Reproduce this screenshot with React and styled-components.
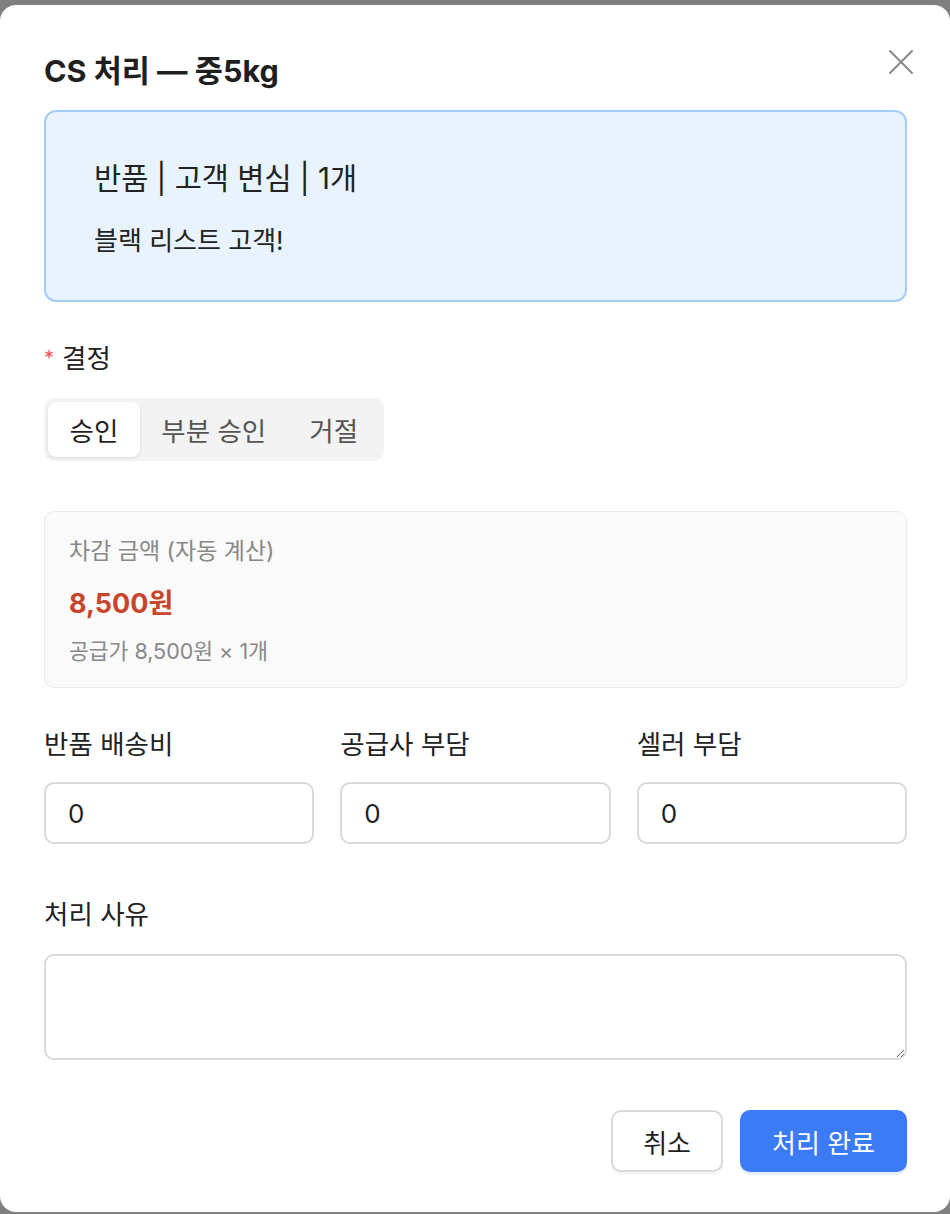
import React, {useState} from "react"
import styled, {createGlobalStyle} from "styled-components"


const GlobalStyle = createGlobalStyle`
    html, body {
        margin: 0;
        padding: 0;
        background: #808080;
    }
    body {
        font-family: Inter, "Noto Sans CJK KR", "Noto Sans", sans-serif;
        color: #1f1f1f;
    }
    * {
        box-sizing: border-box;
    }
`

const Overlay = styled.div`
    padding-top: 5px;
    height: 1214px;
    overflow: hidden;
`

const Modal = styled.div`
    background: #fff;
    border-radius: 16px;
    height: 1207px;
    padding: 38px 43px 0 44px;
    display: flex;
    flex-direction: column;
`

const Header = styled.div`
    display: flex;
    justify-content: space-between;
    align-items: flex-start;
    margin-bottom: 22px;
`

const Title = styled.h2`
    margin: 11px 0 0;
    font-size: 30.5px;
    line-height: 34px;
    font-weight: 700;
    color: #1f1f1f;
`

const CloseButton = styled.button`
    width: 32px;
    height: 32px;
    margin: 3px -10px 0 0;
    padding: 0;
    border: none;
    background: none;
    display: flex;
    align-items: center;
    justify-content: center;
    color: #8a8a8a;
    cursor: pointer;
`

const InfoBox = styled.div`
    height: 192px;
    border: 2px solid #a3cdf8;
    border-radius: 12px;
    background: #e8f3fe;
    padding: 48px 48px 0;
`

const InfoTitle = styled.div`
    font-size: 29.5px;
    line-height: 36px;
    color: #222;
`

const InfoNote = styled.div`
    margin-top: 29px;
    font-size: 26px;
    line-height: 32px;
    color: #222;
`

const Label = styled.div`
    font-size: 26.5px;
    line-height: 34px;
    color: #222;
    margin-top: ${props => props.top}px;
    margin-bottom: ${props => props.bottom}px;
`

const Required = styled.span`
    color: #f0555a;
    font-size: 20px;
    margin-right: 8px;
    vertical-align: top;
`

const Segmented = styled.div`
    display: inline-flex;
    align-self: flex-start;
    height: 63px;
    padding: 4px;
    background: #f3f3f3;
    border-radius: 10px;
`

const Segment = styled.button`
    border: none;
    height: 55px;
    padding: 0 21.5px;
    border-radius: 8px;
    font-family: inherit;
    font-size: 26.5px;
    color: ${props => props.active ? "#1f1f1f" : "#555"};
    background: ${props => props.active ? "#fff" : "transparent"};
    box-shadow: ${props => props.active ? "0 1px 3px rgba(0,0,0,0.12)" : "none"};
    cursor: pointer;
`

const DeductBox = styled.div`
    margin-top: 50px;
    height: 177px;
    border: 1px solid #ebebeb;
    border-radius: 10px;
    background: #fafafa;
    padding: 24px 24px 0;
`

const DeductLabel = styled.div`
    font-size: 23px;
    line-height: 30px;
    color: #888;
`

const Amount = styled.div`
    margin-top: 20px;
    font-size: 27px;
    line-height: 36px;
    font-weight: 700;
    color: #c8442a;
`

const SubText = styled.div`
    margin-top: 15px;
    font-size: 21.5px;
    line-height: 28px;
    color: #888;
`

const FieldRow = styled.div`
    display: grid;
    grid-template-columns: repeat(3, 1fr);
    gap: 26px;
`

const Field = styled.div`
    display: flex;
    flex-direction: column;
`

const Input = styled.input`
    height: 62px;
    width: 100%;
    border: 2px solid #d9d9d9;
    border-radius: 10px;
    padding: 0 22px;
    font-family: inherit;
    font-size: 26px;
    color: #1f1f1f;
    outline: none;
`

const TextArea = styled.textarea`
    height: 106px;
    width: 100%;
    border: 2px solid #d9d9d9;
    border-radius: 10px;
    padding: 14px 22px;
    font-family: inherit;
    font-size: 26px;
    outline: none;
`

const Footer = styled.div`
    display: flex;
    justify-content: flex-end;
    gap: 17px;
    margin-top: 50px;
`

const Button = styled.button`
    height: 62px;
    padding: 0 ${props => props.primary ? 32 : 30}px;
    border-radius: 10px;
    border: ${props => props.primary ? "none" : "2px solid #d9d9d9"};
    background: ${props => props.primary ? "#3c7bf6" : "#fff"};
    color: ${props => props.primary ? "#fff" : "#1f1f1f"};
    font-family: inherit;
    font-size: 26px;
    box-shadow: ${props => props.primary ? "0 3px 0 #e6f0fe" : "0 3px 0 #f5f5f5"};
    cursor: pointer;
`


const fields = ["반품 배송비", "공급사 부담", "셀러 부담"]
const options = ["승인", "부분 승인", "거절"]


const App = () => {
    const [decision, setDecision] = useState("승인")

    return (
        <Overlay>
            <GlobalStyle/>
            <Modal>
                <Header>
                    <Title>CS 처리 — 중5kg</Title>
                    <CloseButton aria-label="close">
                        <svg width="26" height="26" viewBox="0 0 26 26" fill="none" stroke="currentColor" strokeWidth="2" strokeLinecap="round">
                            <path d="M2 2 L24 24 M24 2 L2 24"/>
                        </svg>
                    </CloseButton>
                </Header>

                <InfoBox>
                    <InfoTitle>반품 | 고객 변심 | 1개</InfoTitle>
                    <InfoNote>블랙 리스트 고객!</InfoNote>
                </InfoBox>

                <Label top={39} bottom={23}><Required>*</Required>결정</Label>
                <Segmented>
                    {options.map(item => (
                        <Segment key={item} active={decision === item} onClick={() => setDecision(item)}>
                            {item}
                        </Segment>
                    ))}
                </Segmented>

                <DeductBox>
                    <DeductLabel>차감 금액 (자동 계산)</DeductLabel>
                    <Amount>8,500원</Amount>
                    <SubText>공급가 8,500원 × 1개</SubText>
                </DeductBox>

                <FieldRow>
                    {fields.map(name => (
                        <Field key={name}>
                            <Label top={39} bottom={21}>{name}</Label>
                            <Input defaultValue="0"/>
                        </Field>
                    ))}
                </FieldRow>

                <Label top={53} bottom={23}>처리 사유</Label>
                <TextArea/>

                <Footer>
                    <Button>취소</Button>
                    <Button primary>처리 완료</Button>
                </Footer>
            </Modal>
        </Overlay>
    )
}


export default App
